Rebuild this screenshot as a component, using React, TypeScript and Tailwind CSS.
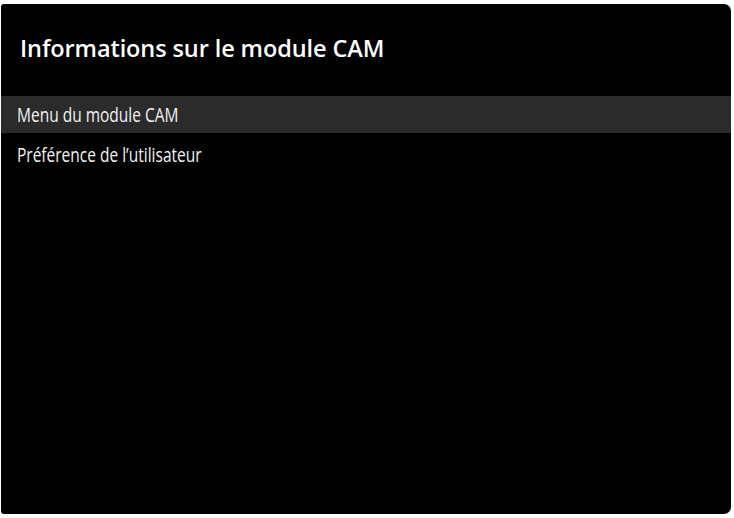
export default function App() {
  const items = ["Menu du module CAM", "Préférence de l’utilisateur"];
  const selected = 0;

  return (
    <div className="flex h-[518px] w-[734px] bg-white pb-[4px] pl-[1px] pr-[3px] pt-[4px]">
      <div className="flex flex-1 flex-col overflow-hidden rounded-l-[3px] rounded-r-[7px] bg-black font-['Open_Sans',sans-serif] text-white">
        <h1 className="pl-[19px] pt-[28px] text-[23.5px] font-semibold leading-[32px] tracking-[-0.1px]">
          Informations sur le module CAM
        </h1>
        <ul className="mt-[32px] flex flex-col gap-[3px]">
          {items.map((label, i) => (
            <li
              key={label}
              className={
                i === selected
                  ? "flex h-[37px] items-center bg-[#2b2b2b] pl-[16px]"
                  : "flex h-[37px] items-center pl-[16px]"
              }
            >
              <span className="inline-block origin-left scale-x-[0.775] whitespace-nowrap text-[20px] text-[#f2f2f2]">
                {label}
              </span>
            </li>
          ))}
        </ul>
      </div>
    </div>
  );
}
